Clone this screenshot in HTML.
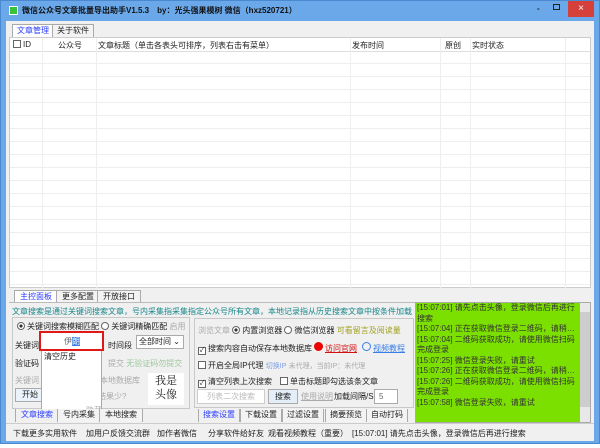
<!DOCTYPE html>
<html><head><meta charset="utf-8"><style>
*{box-sizing:border-box;margin:0;padding:0}
body{width:600px;height:448px;background:#fff;font-family:"Liberation Sans","Noto Sans CJK SC",sans-serif;font-size:8px;color:#222;position:relative;overflow:hidden}
.a{position:absolute;white-space:nowrap}
.win{left:0;top:0;width:600px;height:444px;background:#6aa8ea;border:1px solid #4a88d0}
.cl{left:6px;top:21px;width:588px;height:420px;background:#f0f0f0}
.tab{position:absolute;height:13px;padding:0 4px;border:1px solid #aaa;border-bottom:none;background:#f3f3f3;line-height:12px;font-size:8px}
.sel{color:#2a3cff;background:#fff}
.box{position:absolute;border:1px solid #c8c8c8;background:#f0f0f0}
.cb{display:inline-block;width:8px;height:8px;border:1px solid #666;background:#fff;vertical-align:-1px;margin-right:2px;font-size:7px;line-height:6px;text-align:center}
.rd{display:inline-block;width:8px;height:8px;border:1px solid #666;border-radius:50%;background:#fff;vertical-align:-1px;margin-right:2px}
.gray{color:#aaa}
.btn{position:absolute;border:1px solid #aaa;background:#e8e8e8;text-align:center}
.log div{overflow:hidden;text-overflow:ellipsis}
</style></head><body>
<div class="a win"></div>
<div class="a" style="left:9px;top:6px;width:9px;height:9px;background:#3ac23a;border:1px solid #fff"></div>
<div class="a" style="left:22px;top:5px;font-size:8px;font-weight:bold;color:#111">微信公众号文章批量导出助手V1.5.3　by：光头强果模树 微信（hxz520721）</div>
<div class="a" style="left:537px;top:4px;color:#222;font-weight:bold">-</div>
<div class="a" style="left:553px;top:4px;width:7px;height:6px;border:1px solid #222"></div>
<div class="a" style="left:568px;top:1px;width:26px;height:16px;background:#d6403a;color:#fff;text-align:center;line-height:15px;font-size:10px">×</div>
<div class="a cl"></div>
<div class="tab sel" style="left:12px;top:24px">文章管理</div>
<div class="tab" style="left:52px;top:24px">关于软件</div>
<div class="a" style="left:9px;top:37px;width:582px;height:251px;background:#fff;border:1px solid #ccc;
background-image:repeating-linear-gradient(#fff 0,#fff 12px,#eee 12px,#eee 13px)"></div>
<div class="a" style="left:9px;top:37px;width:582px;height:15px;background:#fff;border:1px solid #ccc;border-bottom:1px solid #ddd"></div>
<div class="a" style="left:13px;top:40px"><span class="cb"></span>ID</div>
<div class="a" style="left:58px;top:40px">公众号</div>
<div class="a" style="left:98px;top:40px">文章标题（单击各表头可排序，列表右击有菜单）</div>
<div class="a" style="left:352px;top:40px">发布时间</div>
<div class="a" style="left:445px;top:40px">原创</div>
<div class="a" style="left:472px;top:40px">实时状态</div>
<div class="a" style="left:42px;top:38px;width:1px;height:250px;background:#eee"></div>
<div class="a" style="left:96px;top:38px;width:1px;height:250px;background:#eee"></div>
<div class="a" style="left:350px;top:38px;width:1px;height:250px;background:#eee"></div>
<div class="a" style="left:440px;top:38px;width:1px;height:250px;background:#eee"></div>
<div class="a" style="left:470px;top:38px;width:1px;height:250px;background:#eee"></div>
<div class="a" style="left:565px;top:38px;width:1px;height:250px;background:#eee"></div>

<div class="tab sel" style="left:14px;top:290px;padding:0 5px">主控面板</div>
<div class="tab" style="left:56px;top:290px;padding:0 5px">更多配置</div>
<div class="tab" style="left:97px;top:290px;padding:0 5px">开放接口</div>
<div class="a" style="left:9px;top:302px;width:582px;height:1px;background:#bbb"></div>
<div class="a" style="left:12px;top:306px;color:#16868a">文章搜索是通过关键词搜索文章，号内采集指采集指定公众号所有文章，本地记录指从历史搜索文章中按条件加载</div>

<div class="box" style="left:12px;top:317px;width:178px;height:92px"></div>
<div class="a" style="left:17px;top:321px"><span class="rd" style="background:radial-gradient(#333 35%,#fff 40%)"></span>关键词搜索模糊匹配 <span class="rd"></span>关键词精确匹配 <span class="gray">启用</span></div>
<div class="a" style="left:15px;top:340px">关键词</div>
<div class="a" style="left:108px;top:340px">时间段</div>
<div class="a" style="left:136px;top:335px;width:48px;height:14px;border:1px solid #aaa;background:#fff;padding-left:2px;line-height:12px">全部时间 ⌄</div>
<div class="a" style="left:15px;top:358px">验证码</div>
<div class="a gray" style="left:108px;top:358px">提交 <span style="color:#9cc89c">无验证码勿提交</span></div>
<div class="a gray" style="left:15px;top:375px">关键词</div>
<div class="a gray" style="left:100px;top:375px">本地数据库</div>
<div class="btn" style="left:15px;top:388px;width:30px;height:14px;line-height:12px;background:#eaf2fb">开始</div>
<div class="a gray" style="left:98px;top:391px">结果少?</div>
<div class="a" style="left:148px;top:373px;width:36px;height:32px;background:#fff;font-size:11px;line-height:14px;text-align:center;font-family:'Noto Serif CJK SC',serif">我是<br>头像</div>
<div class="a" style="left:41px;top:333px;width:61px;height:86px;background:#fff;border:1px solid #aaa"></div>
<div class="a" style="left:39px;top:331px;width:65px;height:20px;border:2px solid #e01818;background:#fff"></div>
<div class="a" style="left:64px;top:336px;color:#666">伊<span style="background:#3a7ee8;color:#fff">朗</span></div>
<div class="a" style="left:44px;top:351px">清空历史</div>
<div class="a gray" style="left:86px;top:405px">隐藏</div>
<div class="tab sel" style="left:15px;top:409px;border-top:none;background:#f0f0f0;padding:0 5px">文章搜索</div>
<div class="tab" style="left:57px;top:409px;border-top:none;padding:0 5px">号内采集</div>
<div class="tab" style="left:99px;top:409px;border-top:none;padding:0 5px">本地搜索</div>

<div class="box" style="left:194px;top:318px;width:220px;height:90px"></div>
<div class="a" style="left:198px;top:325px"><span class="gray">浏览文章</span> <span class="rd" style="background:radial-gradient(#333 35%,#fff 40%)"></span>内置浏览器 <span class="rd"></span>微信浏览器 <span style="color:#a0a020">可看留言及阅读量</span></div>
<div class="a" style="left:198px;top:343px"><span class="cb">✓</span>搜索内容自动保存本地数据库</div>
<div class="a" style="left:314px;top:342px;width:9px;height:9px;border-radius:50%;background:#e00"></div>
<div class="a" style="left:325px;top:343px;color:#d01010;text-decoration:underline">访问官网</div>
<div class="a" style="left:362px;top:342px;width:9px;height:9px;border-radius:50%;border:1px solid #3a7ee8"></div>
<div class="a" style="left:373px;top:343px;color:#3a7ee8;text-decoration:underline">视频教程</div>
<div class="a" style="left:198px;top:360px"><span class="cb"></span>开启全局IP代理 <span style="color:#7a9ee8;font-size:7px">切换IP</span> <span class="gray" style="font-size:7px">未代理，当前IP：未代理</span></div>
<div class="a" style="left:198px;top:376px"><span class="cb">✓</span>清空列表上次搜索　<span class="cb"></span>单击标题即勾选该条文章</div>
<div class="a" style="left:197px;top:389px;width:68px;height:15px;border:1px solid #ccc;background:#fff;color:#bbb;text-align:center;line-height:13px">列表二次搜索</div>
<div class="btn" style="left:268px;top:389px;width:30px;height:15px;line-height:13px;background:#e4eef9">搜索</div>
<div class="a gray" style="left:301px;top:391px;text-decoration:underline">使用说明</div>
<div class="a" style="left:334px;top:391px">加载间隔/S</div>
<div class="a" style="left:374px;top:389px;width:24px;height:15px;border:1px solid #aaa;background:#fff;padding-left:4px;line-height:13px;color:#666">5</div>
<div class="tab sel" style="left:198px;top:409px;border-top:none;background:#f0f0f0">搜索设置</div>
<div class="tab" style="left:240px;top:409px;border-top:none">下载设置</div>
<div class="tab" style="left:282px;top:409px;border-top:none">过滤设置</div>
<div class="tab" style="left:325px;top:409px;border-top:none">摘要预览</div>
<div class="tab" style="left:366px;top:409px;border-top:none">自动打码</div>

<div class="a" style="left:415px;top:302px;width:176px;height:121px;background:#7be000;border:1px solid #aaa"></div>
<div class="a" style="left:580px;top:303px;width:10px;height:119px;background:#e8e8e8"></div>
<div class="a" style="left:580px;top:312px;width:10px;height:95px;background:#cdcdcd"></div>
<div class="a log" style="left:417px;top:303px;width:162px;white-space:normal;line-height:10.5px;color:#333;font-size:8px">
<div style="white-space:normal">[15:07:01] 请先点击头像，登录微信后再进行搜索</div>
<div style="white-space:nowrap">[15:07:04] 正在获取微信登录二维码，请稍后...</div>
<div style="white-space:normal">[15:07:04] 二维码获取成功，请使用微信扫码完成登录</div>
<div>[15:07:25] 微信登录失败，请重试</div>
<div style="white-space:nowrap">[15:07:26] 正在获取微信登录二维码，请稍后...</div>
<div style="white-space:normal">[15:07:26] 二维码获取成功，请使用微信扫码完成登录</div>
<div>[15:07:58] 微信登录失败，请重试</div></div>

<div class="a" style="left:6px;top:423px;width:588px;height:18px;background:#f0f0f0;border-top:1px solid #ccc"></div>
<div class="a" style="left:13px;top:428px">下载更多实用软件</div>
<div class="a" style="left:86px;top:428px">加用户反馈交流群</div>
<div class="a" style="left:157px;top:428px">加作者微信</div>
<div class="a" style="left:208px;top:428px">分享软件给好友</div>
<div class="a" style="left:268px;top:428px">观看视频教程（重要）</div>
<div class="a" style="left:352px;top:428px">[15:07:01] 请先点击头像，登录微信后再进行搜索</div>
</body></html>
